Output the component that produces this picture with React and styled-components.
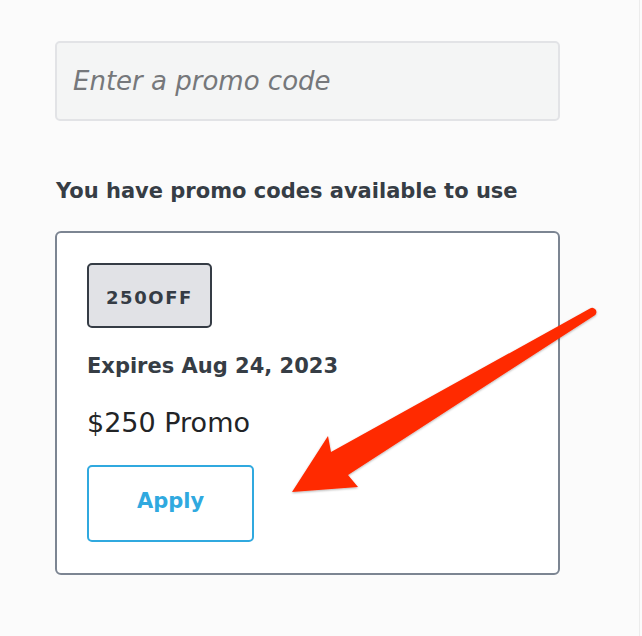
import React from 'react';
import styled, { createGlobalStyle } from 'styled-components';

const GlobalStyle = createGlobalStyle`
  html, body {
    margin: 0;
    padding: 0;
    background: #fbfbfb;
  }
  body {
    font-family: "DejaVu Sans", "Open Sans", Arial, sans-serif;
  }
`;

const Page = styled.div`
  position: relative;
  width: 640px;
  height: 636px;
  box-sizing: border-box;
  padding: 41px 0 0 55px;
  border-right: 1px solid #ececec;
`;

const Column = styled.div`
  width: 505px;
  display: flex;
  flex-direction: column;
`;

const PromoInput = styled.input`
  box-sizing: border-box;
  width: 505px;
  height: 80px;
  padding: 0 16px;
  border: 2px solid #e2e3e6;
  border-radius: 5px;
  background: #f4f5f5;
  font-family: inherit;
  font-size: 26px;
  color: #333;
  outline: none;

  &::placeholder {
    font-style: italic;
    color: #76787b;
  }
`;

const Heading = styled.h2`
  margin: 58px 0 0 1px;
  font-size: 21px;
  line-height: 24px;
  font-weight: 700;
  color: #363d45;
`;

const Card = styled.div`
  box-sizing: border-box;
  margin-top: 28px;
  width: 505px;
  padding: 30px 30px 31px;
  border: 2px solid #7c8592;
  border-radius: 6px;
  background: #fff;
  display: flex;
  flex-direction: column;
  align-items: flex-start;
`;

const CodeBadge = styled.div`
  box-sizing: border-box;
  width: 125px;
  height: 65px;
  padding-top: 4px;
  display: flex;
  align-items: center;
  justify-content: center;
  border: 2px solid #353c45;
  border-radius: 5px;
  background: #e1e2e6;
  color: #353c45;
  font-size: 18px;
  font-weight: 700;
  letter-spacing: 1.6px;
`;

const Expires = styled.div`
  margin-top: 26px;
  font-size: 21px;
  line-height: 24px;
  font-weight: 700;
  color: #363d45;
`;

const Amount = styled.div`
  margin-top: 29px;
  font-size: 27px;
  line-height: 32px;
  color: #222426;
`;

const ApplyButton = styled.button`
  box-sizing: border-box;
  margin-top: 26px;
  width: 167px;
  height: 77px;
  padding: 0 0 6px;
  border: 2px solid #30a9df;
  border-radius: 5px;
  background: #fff;
  color: #30a9df;
  font-family: inherit;
  font-size: 21px;
  font-weight: 600;
  cursor: pointer;
`;

const ArrowLayer = styled.svg`
  position: absolute;
  left: 0;
  top: 0;
  width: 640px;
  height: 636px;
  pointer-events: none;
`;

const App = () => (
  <>
    <GlobalStyle />
    <Page>
      <Column>
        <PromoInput placeholder="Enter a promo code" />
        <Heading>You have promo codes available to use</Heading>
        <Card>
          <CodeBadge>250OFF</CodeBadge>
          <Expires>Expires Aug 24, 2023</Expires>
          <Amount>$250 Promo</Amount>
          <ApplyButton>Apply</ApplyButton>
        </Card>
      </Column>
      <ArrowLayer viewBox="0 0 640 636">
        <defs>
          <filter id="shadow" x="-10%" y="-10%" width="120%" height="120%">
            <feDropShadow dx="0" dy="1" stdDeviation="1" floodColor="#000" floodOpacity="0.3" />
          </filter>
        </defs>
        <path
          d="M590 308.5 L331 452 L328 436 L292 492 L358 487 L348 475 L594.5 315.5 A4 4 0 0 0 590 308.5 Z"
          fill="#ff2a00"
          filter="url(#shadow)"
        />
      </ArrowLayer>
    </Page>
  </>
);

export default App;
